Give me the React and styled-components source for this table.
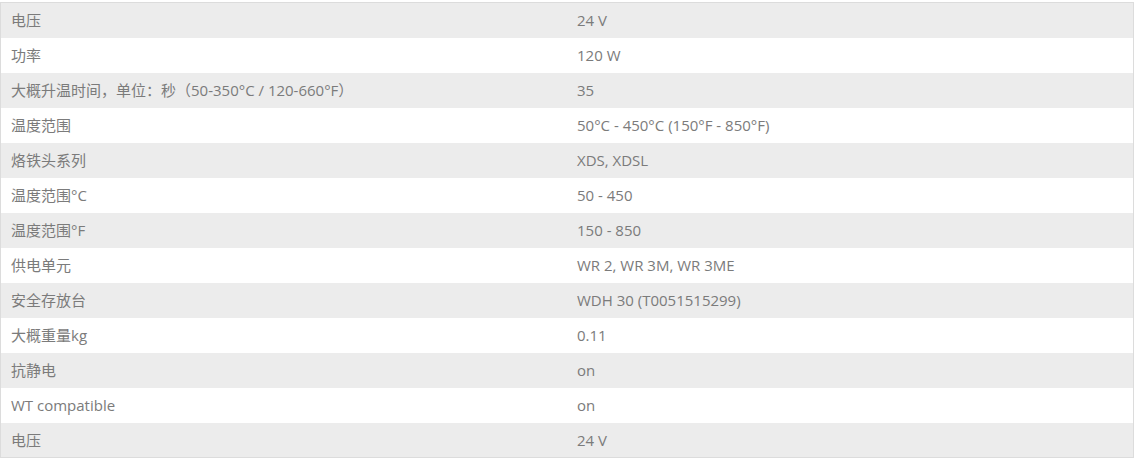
import React from "react";
import styled, { createGlobalStyle } from "styled-components";

const Global = createGlobalStyle`
  html, body { margin: 0; padding: 0; background: #fff; }
`;

const Page = styled.div`
  padding-top: 2px;
`;

const Table = styled.table`
  width: 1134px;
  border-collapse: collapse;
  border: 1px solid #dcdcdc;
  font-family: "Open Sans", "Noto Sans CJK SC", sans-serif;
  font-size: 15px;
  color: #7b7b7b;
  text-spacing-trim: space-all;
`;

const Row = styled.tr`
  height: 35px;
  background: ${(p) => (p.$odd ? "#ececec" : "#ffffff")};
`;

const Cell = styled.td`
  width: 50%;
  padding: 0 10px;
  vertical-align: middle;
  line-height: 20px;
`;

const rows = [
  ["电压", "24 V"],
  ["功率", "120 W"],
  ["大概升温时间，单位：秒（50-350°C / 120-660°F）", "35"],
  ["温度范围", "50°C - 450°C (150°F - 850°F)"],
  ["烙铁头系列", "XDS, XDSL"],
  ["温度范围°C", "50 - 450"],
  ["温度范围°F", "150 - 850"],
  ["供电单元", "WR 2, WR 3M, WR 3ME"],
  ["安全存放台", "WDH 30 (T0051515299)"],
  ["大概重量kg", "0.11"],
  ["抗静电", "on"],
  ["WT compatible", "on"],
  ["电压", "24 V"],
];

export default function App() {
  return (
    <Page>
      <Global />
      <Table>
        <tbody>
          {rows.map(([k, v], i) => (
            <Row key={i} $odd={i % 2 === 0}>
              <Cell>{k}</Cell>
              <Cell>{v}</Cell>
            </Row>
          ))}
        </tbody>
      </Table>
    </Page>
  );
}
